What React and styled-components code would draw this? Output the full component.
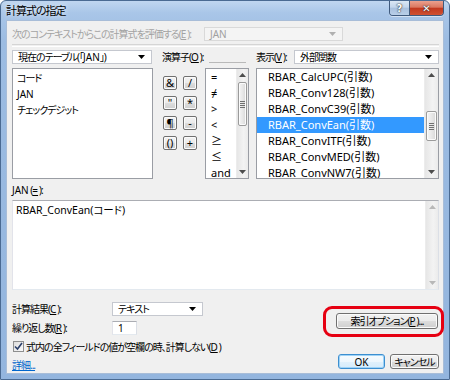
import React from "react";
import styled, { createGlobalStyle, css } from "styled-components";

const Global = createGlobalStyle`
  html, body {
    margin: 0;
    padding: 0;
    background: #ffffff;
  }
  body {
    font-family: "Noto Sans", "Noto Sans CJK JP", sans-serif;
    font-size: 11px;
    color: #000;
    font-feature-settings: "palt";
  }
`;

// Japanese UI text: the reference uses a narrow UI font, so squeeze the kana
const jp = css`
  font-size: 10px;
  letter-spacing: -1px;
`;

const Frame = styled.div`
  width: 450px;
  height: 380px;
  box-sizing: border-box;
  display: flex;
  flex-direction: column;
  border: 1px solid #4a6a92;
  border-radius: 6px 6px 0 0;
  padding: 0 5px 5px 5px;
  background: linear-gradient(180deg, #c0d6f0 0px, #a9c6e8 12px, #9cbce2 40px, #93b5de 100%);
`;

const TitleBar = styled.div`
  height: 19px;
  display: flex;
  align-items: flex-start;
  justify-content: space-between;
`;

const TitleText = styled.span`
  ${jp};
  font-size: 11px;
  margin-top: 3px;
  line-height: 14px;
  text-shadow: 0 0 5px rgba(255, 255, 255, 0.95);
`;

const CaptionGroup = styled.div`
  display: flex;
  border: 1px solid #3f5a7d;
  border-top: none;
  border-radius: 0 0 4px 4px;
  overflow: hidden;
  box-shadow: 0 1px 0 rgba(255, 255, 255, 0.5);
`;

const CaptionButton = styled.div`
  width: ${({ $w }) => $w}px;
  height: 14px;
  display: flex;
  align-items: center;
  justify-content: center;
  font-family: "DejaVu Sans", sans-serif;
  font-weight: bold;
  font-size: 10px;
  color: #fff;
  text-shadow: 0 0 2px #333, 0 0 1px #222;
  background: ${({ $close }) =>
    $close
      ? "linear-gradient(180deg, #eba08e 0%, #db7760 45%, #c2381f 50%, #cf5233 100%)"
      : "linear-gradient(180deg, #dbe7f4 0%, #c2d5ec 45%, #a8c0de 50%, #b9cfe8 100%)"};
  & + & {
    border-left: 1px solid #3f5a7d;
  }
`;

const Client = styled.div`
  flex: 1;
  display: flex;
  flex-direction: column;
  background: #f0f0f0;
  border: 1px solid #a8bdd8;
  padding: 6px 4px 0 5px;
`;

const Label = styled.span`
  ${jp};
  white-space: nowrap;
  line-height: 14px;
  color: ${({ $disabled }) => ($disabled ? "#a3a3a3" : "#000")};
`;

const Key = styled.u`
  letter-spacing: 0;
  margin-right: 1px;
`;

const ContextRow = styled.div`
  display: flex;
  align-items: center;
  height: 14px;
`;

const ContextLabel = styled(Label)`
  width: 192px;
`;

const Combo = styled.div`
  ${jp};
  box-sizing: border-box;
  height: 14px;
  width: ${({ $w }) => ($w ? `${$w}px` : "auto")};
  flex: ${({ $grow }) => ($grow ? 1 : "none")};
  display: flex;
  align-items: center;
  justify-content: space-between;
  padding: 0 6px 0 5px;
  line-height: 12px;
  white-space: nowrap;
  background: ${({ $disabled }) => ($disabled ? "#f4f4f4" : "#ffffff")};
  border: 1px solid ${({ $disabled }) => ($disabled ? "#d9d9d9" : "#c5c8cf")};
  color: ${({ $disabled }) => ($disabled ? "#a0a0a0" : "#000")};
`;

const Latin = styled.span`
  letter-spacing: 0;
  font-size: 10px;
`;

const Separator = styled.div`
  margin-top: 3px;
  height: 1px;
  border-top: 1px solid #d5d5d5;
  border-bottom: 1px solid #ffffff;
`;

const Main = styled.div`
  margin-top: 3px;
  display: grid;
  grid-template-columns: 141px 52px 44px 1fr;
  grid-template-rows: 14px 111px;
  row-gap: 4px;
`;

const OpLabel = styled(Label)`
  grid-column: 2 / span 2;
  padding-left: 9px;
  display: flex;
  align-items: flex-end;
  &::after {
    content: "";
    width: 37px;
    margin: 0 0 1px 5px;
    border-bottom: 1px solid #b9b9b9;
  }
`;

const ViewCell = styled.div`
  display: flex;
  align-items: center;
  padding-left: 7px;
`;

const ViewLabel = styled(Label)`
  width: 38px;
`;

const ListBox = styled.div`
  box-sizing: border-box;
  display: flex;
  border: 1px solid #9a9da4;
  background: #fff;
  overflow: hidden;
  margin-left: ${({ $offset }) => $offset || 0}px;
`;

const Items = styled.div`
  flex: 1;
  min-width: 0;
  display: flex;
  flex-direction: column;
  padding-top: ${({ $top }) => $top || 0}px;
  overflow: hidden;
`;

const Item = styled.div`
  flex: none;
  height: 16px;
  line-height: 16px;
  white-space: nowrap;
  font-size: ${({ $size }) => $size || 11}px;
  letter-spacing: ${({ $squeeze }) => ($squeeze ? "-1px" : "0")};
  padding-left: ${({ $indent }) => $indent}px;
  background: ${({ $selected }) => ($selected ? "#3399ff" : "transparent")};
  color: ${({ $selected }) => ($selected ? "#fff" : "#000")};
`;

const ScrollTrack = styled.div`
  flex: none;
  width: ${({ $w }) => $w}px;
  display: flex;
  flex-direction: column;
  align-items: stretch;
  background: linear-gradient(90deg, #e6e6e6 0%, #f3f3f3 60%, #ebebeb 100%);
  border-left: 1px solid #ececec;
`;

const ArrowBox = styled.div`
  flex: none;
  height: 12px;
  display: flex;
  align-items: center;
  justify-content: center;
`;

const TrackSpace = styled.div`
  flex: 1;
  display: flex;
  flex-direction: column;
`;

const Thumb = styled.div`
  box-sizing: border-box;
  margin: ${({ $top }) => $top}px 1px 0 1px;
  height: ${({ $h }) => $h}px;
  border: 1px solid #9b9b9b;
  border-radius: 2px;
  background: linear-gradient(90deg, #f5f5f5 0%, #e8e8e8 50%, #d8d8d8 100%);
  box-shadow: inset 0 0 0 1px #fbfbfb;
  display: flex;
  align-items: center;
  justify-content: center;
`;

const Grip = styled.div`
  width: 5px;
  height: 7px;
  background: repeating-linear-gradient(180deg, #707070 0px, #707070 1px, transparent 1px, transparent 2px);
`;

const Arrow = ({ down, color = "#4d4d4d" }) => (
  <svg width="7" height="4" viewBox="0 0 7 4">
    <path d={down ? "M0 0 L7 0 L3.5 4 Z" : "M0 4 L7 4 L3.5 0 Z"} fill={color} />
  </svg>
);

const ScrollBar = ({ w = 12, thumbTop, thumbH, disabled }) => (
  <ScrollTrack $w={w}>
    <ArrowBox>
      <Arrow color={disabled ? "#b8b8b8" : "#4d4d4d"} />
    </ArrowBox>
    <TrackSpace>
      {!disabled && (
        <Thumb $top={thumbTop} $h={thumbH}>
          <Grip />
        </Thumb>
      )}
    </TrackSpace>
    <ArrowBox>
      <Arrow down color={disabled ? "#b8b8b8" : "#4d4d4d"} />
    </ArrowBox>
  </ScrollTrack>
);

const OpButtons = styled.div`
  display: grid;
  grid-template-columns: 14px 14px;
  grid-auto-rows: 14px;
  column-gap: 6px;
  row-gap: 6px;
  align-content: start;
  padding: 8px 0 0 10px;
`;

const PushButton = styled.div`
  ${jp};
  box-sizing: border-box;
  display: flex;
  align-items: center;
  justify-content: center;
  white-space: nowrap;
  width: ${({ $w }) => ($w ? `${$w}px` : "auto")};
  height: ${({ $h }) => $h || 15}px;
  border: 1px solid ${({ $default }) => ($default ? "#3c8fd0" : "#707070")};
  border-radius: 3px;
  line-height: 12px;
  background: ${({ $default }) =>
    $default
      ? "linear-gradient(180deg, #f6fbfe 0%, #eef7fd 50%, #e1f1fc 50%, #d6ecfb 100%)"
      : "linear-gradient(180deg, #f2f2f2 0%, #ebebeb 50%, #dddddd 50%, #cfcfcf 100%)"};
  box-shadow: inset 0 0 0 1px ${({ $default }) => ($default ? "#9fd3f7" : "#fbfbfb")};
`;

const OpButton = styled(PushButton)`
  font-family: "Noto Sans", "DejaVu Sans", sans-serif;
  font-size: 11px;
  letter-spacing: 0;
  border-radius: 2px;
`;

const JanLabel = styled(Label)`
  margin-top: 5px;
  line-height: 12px;
`;

const FormulaBox = styled.div`
  margin-top: 4px;
  height: 90px;
  box-sizing: border-box;
  display: flex;
  background: #fff;
  border: 1px solid #abadb3;
  border-left-color: #e2e3ea;
  border-right-color: #dbdfe6;
  border-bottom-color: #e3e9ef;
`;

const FormulaText = styled.div`
  flex: 1;
  padding: 2px 3px;
  font-size: 10.5px;
  line-height: 14px;
`;

const Bottom = styled.div`
  margin-top: 12px;
  display: flex;
  justify-content: space-between;
`;

const LeftForm = styled.div`
  display: flex;
  flex-direction: column;
  gap: 5px;
`;

const FieldRow = styled.div`
  display: flex;
  align-items: center;
  height: 14px;
`;

const FieldLabel = styled(Label)`
  width: 100px;
`;

const TextInput = styled.div`
  box-sizing: border-box;
  width: ${({ $w }) => $w}px;
  height: 14px;
  line-height: 12px;
  font-size: 10px;
  padding-left: 5px;
  background: #fff;
  border: 1px solid #abadb3;
  border-left-color: #e2e3ea;
  border-right-color: #dbdfe6;
  border-bottom-color: #e3e9ef;
`;

const CheckRow = styled.div`
  display: flex;
  align-items: center;
  gap: 2px;
  height: 13px;
`;

const CheckBox = styled.div`
  box-sizing: border-box;
  width: 11px;
  height: 11px;
  margin-left: 1px;
  border: 1px solid #8e8f8f;
  background: linear-gradient(135deg, #dcdcdc 0%, #fbfbfb 100%);
  display: flex;
  align-items: center;
  justify-content: center;
`;

const DetailLink = styled.span`
  ${jp};
  margin-top: 1px;
  line-height: 12px;
  color: #0066cc;
  text-decoration: underline;
`;

const RightCol = styled.div`
  display: flex;
  flex-direction: column;
  align-items: flex-end;
`;

const Highlight = styled.div`
  margin-top: 4px;
  margin-right: -5px;
  border: 3px solid #e60012;
  border-radius: 9px;
  padding: 4px 3px 5px 10px;
`;

const ButtonRow = styled.div`
  margin-top: 17px;
  display: flex;
  gap: 5px;
`;

const fields = [
  { t: "コード", jp: true },
  { t: "JAN" },
  { t: "チェックデジット", jp: true },
];
const ops = ["=", "≠", ">", "<", "≥", "≤", "and"];
const funcs = [
  "RBAR_CalcUPC(引数)",
  "RBAR_Conv128(引数)",
  "RBAR_ConvC39(引数)",
  "RBAR_ConvEan(引数)",
  "RBAR_ConvITF(引数)",
  "RBAR_ConvMED(引数)",
  "RBAR_ConvNW7(引数)",
];
const opKeys = ["&", "/", "\"", "*", "¶", "-", "()", "+"];

const App = () => (
  <>
    <Global />
    <Frame>
      <TitleBar>
        <TitleText>計算式の指定</TitleText>
        <CaptionGroup>
          <CaptionButton $w={19}>?</CaptionButton>
          <CaptionButton $w={33} $close>
            ✕
          </CaptionButton>
        </CaptionGroup>
      </TitleBar>
      <Client>
        <ContextRow>
          <ContextLabel $disabled>
            次のコンテキストからこの計算式を評価する(<Key>E</Key>):
          </ContextLabel>
          <Combo $w={139} $disabled>
            <Latin>JAN</Latin>
            <Arrow down color="#b0b0b0" />
          </Combo>
        </ContextRow>
        <Separator />
        <Main>
          <Combo $w={140}>
            <span>
              現在のテーブル(「<Latin>JAN</Latin>」)
            </span>
            <Arrow down color="#000" />
          </Combo>
          <OpLabel>
            <span>
              演算子(<Key>O</Key>):
            </span>
          </OpLabel>
          <ViewCell>
            <ViewLabel>
              表示(<Key>V</Key>):
            </ViewLabel>
            <Combo $grow>
              <span>外部関数</span>
              <Arrow down color="#000" />
            </Combo>
          </ViewCell>

          <ListBox>
            <Items $top={1}>
              {fields.map(f => (
                <Item key={f.t} $indent={4} $size={10} $squeeze={f.jp}>
                  {f.t}
                </Item>
              ))}
            </Items>
          </ListBox>
          <OpButtons>
            {opKeys.map(k => (
              <OpButton key={k} $w={14} $h={14}>
                {k}
              </OpButton>
            ))}
          </OpButtons>
          <ListBox>
            <Items>
              {ops.map(o => (
                <Item key={o} $indent={5}>
                  {o}
                </Item>
              ))}
            </Items>
            <ScrollBar w={11} thumbTop={1} thumbH={44} />
          </ListBox>
          <ListBox $offset={7}>
            <Items>
              {funcs.map((f, i) => (
                <Item key={f} $indent={11} $selected={i === 3}>
                  {f}
                </Item>
              ))}
            </Items>
            <ScrollBar w={13} thumbTop={30} thumbH={30} />
          </ListBox>
        </Main>

        <JanLabel>
          <Latin>JAN</Latin> (<Key>=</Key>):
        </JanLabel>
        <FormulaBox>
          <FormulaText>RBAR_ConvEan(コード)</FormulaText>
          <ScrollBar w={12} disabled />
        </FormulaBox>

        <Bottom>
          <LeftForm>
            <FieldRow>
              <FieldLabel>
                計算結果(<Key>C</Key>):
              </FieldLabel>
              <Combo $w={91}>
                <span>テキスト</span>
                <Arrow down color="#000" />
              </Combo>
            </FieldRow>
            <FieldRow>
              <FieldLabel>
                繰り返し数(<Key>R</Key>):
              </FieldLabel>
              <TextInput $w={25}>1</TextInput>
            </FieldRow>
            <CheckRow>
              <CheckBox>
                <svg width="9" height="9" viewBox="0 0 9 9">
                  <path d="M1 4.5 L3.5 7 L8 1" fill="none" stroke="#2a3f6a" strokeWidth="1.6" />
                </svg>
              </CheckBox>
              <Label>
                式内の全フィールドの値が空欄の時、計算しない(<Key>D</Key>)
              </Label>
            </CheckRow>
            <DetailLink>詳細...</DetailLink>
          </LeftForm>
          <RightCol>
            <Highlight>
              <PushButton $w={102} $h={16}>
                索引オプション(<Key>P</Key>)...
              </PushButton>
            </Highlight>
            <ButtonRow>
              <PushButton $w={47} $default>
                <Latin>OK</Latin>
              </PushButton>
              <PushButton $w={49}>キャンセル</PushButton>
            </ButtonRow>
          </RightCol>
        </Bottom>
      </Client>
    </Frame>
  </>
);

export default App;
